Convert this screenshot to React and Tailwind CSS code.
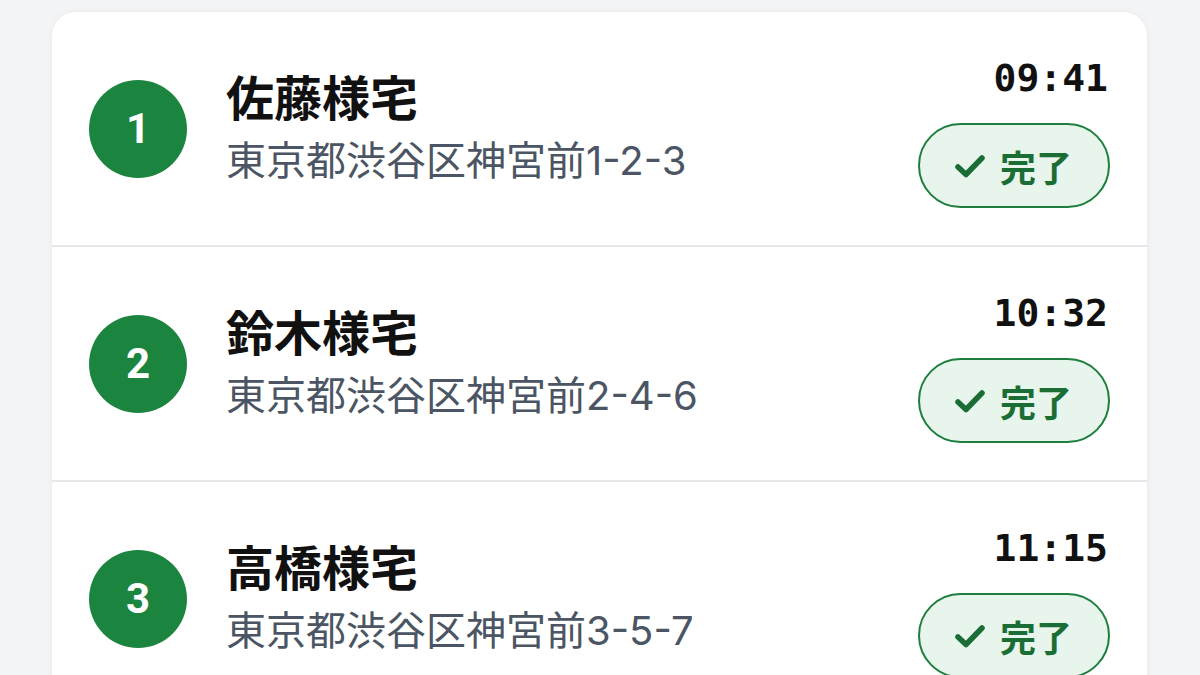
import React from 'react';

const stops = [
  { no: 1, name: '佐藤様宅', address: '東京都渋谷区神宮前1-2-3', time: '09:41' },
  { no: 2, name: '鈴木様宅', address: '東京都渋谷区神宮前2-4-6', time: '10:32' },
  { no: 3, name: '高橋様宅', address: '東京都渋谷区神宮前3-5-7', time: '11:15' },
];

const CheckIcon = () => (
  <svg width="32" height="26" viewBox="0 0 32 26" fill="none">
    <path
      d="M4 14 L12 21.5 L28 5"
      stroke="currentColor"
      strokeWidth="5.5"
      strokeLinecap="round"
      strokeLinejoin="round"
    />
  </svg>
);

const StopRow = ({ stop }) => (
  <div className="h-[235px] flex items-center px-[37px] border-b-2 border-[#e5e7eb]">
    <div className="w-[98px] h-[98px] rounded-full bg-[#1b8540] text-white flex items-center justify-center shrink-0 font-['Roboto',sans-serif] font-bold text-[42px] leading-none">
      {stop.no}
    </div>
    <div className="ml-[39px] flex-1 flex flex-col font-['Inter','Noto_Sans_CJK_JP',sans-serif]">
      <div className="text-[48px] leading-[58px] font-bold text-[#111111]">{stop.name}</div>
      <div className="text-[40px] leading-[54px] text-[#4b5563] mt-[6px]">{stop.address}</div>
    </div>
    <div className="flex flex-col items-end mt-[10px]">
      <div className="font-['DejaVu_Sans_Mono',monospace] font-bold text-[38px] leading-none text-[#111111] mr-[2px]">
        {stop.time}
      </div>
      <div className="mt-[26px] h-[85px] inline-flex items-center gap-[14px] pl-[34px] pr-[36px] rounded-full border-[2.5px] border-[#1e7e3e] bg-[#e8f5ec] text-[#1a6e35]">
        <CheckIcon />
        <span className="font-['Noto_Sans_CJK_JP',sans-serif] font-bold text-[36px] leading-none">完了</span>
      </div>
    </div>
  </div>
);

export default function App() {
  return (
    <div className="w-[1200px] h-[675px] overflow-hidden bg-[#f3f4f6] pt-[12px] pl-[52px] pr-[53px]">
      <div className="bg-white rounded-t-[24px] shadow-[0_1px_6px_rgba(0,0,0,0.06)] h-[800px]">
        {stops.map((stop) => (
          <StopRow key={stop.no} stop={stop} />
        ))}
      </div>
    </div>
  );
}
